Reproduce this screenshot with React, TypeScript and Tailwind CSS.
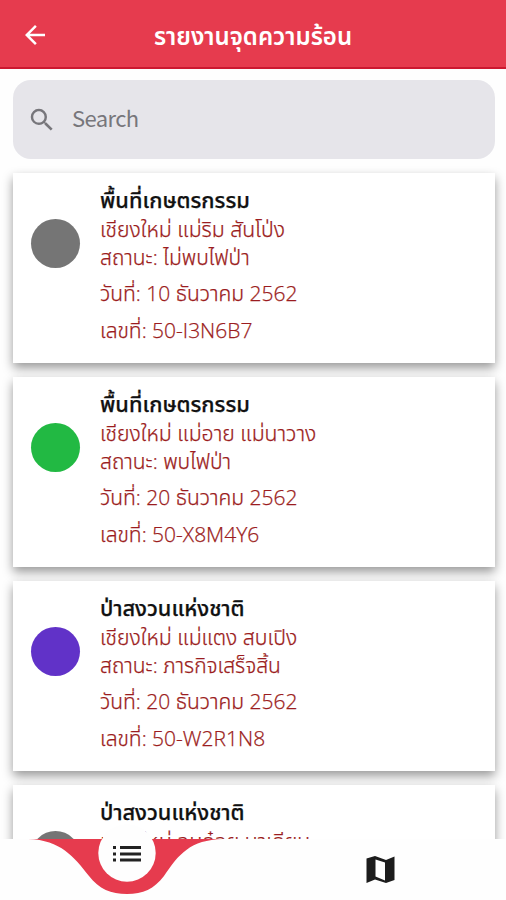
type Report = {
  id: number
  area: string
  place: string
  dot: string
  details?: { status: string; date: string; code: string }
}

const reports: Report[] = [
  {
    id: 1,
    area: 'พื้นที่เกษตรกรรม',
    place: 'เชียงใหม่ แม่ริม สันโป่ง',
    dot: 'bg-[#757575]',
    details: { status: 'ไม่พบไฟป่า', date: '10 ธันวาคม 2562', code: '50-I3N6B7' },
  },
  {
    id: 2,
    area: 'พื้นที่เกษตรกรรม',
    place: 'เชียงใหม่ แม่อาย แม่นาวาง',
    dot: 'bg-[#22b943]',
    details: { status: 'พบไฟป่า', date: '20 ธันวาคม 2562', code: '50-X8M4Y6' },
  },
  {
    id: 3,
    area: 'ป่าสงวนแห่งชาติ',
    place: 'เชียงใหม่ แม่แตง สบเปิง',
    dot: 'bg-[#6132c8]',
    details: { status: 'ภารกิจเสร็จสิ้น', date: '20 ธันวาคม 2562', code: '50-W2R1N8' },
  },
  {
    id: 4,
    area: 'ป่าสงวนแห่งชาติ',
    place: 'เชียงใหม่ อมก๋อย นาเกียน',
    dot: 'bg-[#757575]',
  },
]

function ReportCard({ report }: { report: Report }) {
  return (
    <li className="flex h-[190px] shrink-0 bg-white pl-[18px] shadow-[0_5px_10px_rgba(0,0,0,0.4)]">
      <div className={`mt-[46px] size-[49px] shrink-0 rounded-full ${report.dot}`} />
      <div className="ml-5 flex flex-col pt-3 font-['Open_Sans','Noto_Sans_Thai','Noto_Sans',sans-serif] text-[21px] font-light whitespace-nowrap text-[#9b1c20] [-webkit-text-stroke:0.25px]">
        <h2 className="h-[29px] text-[21.8px] leading-[29px] font-medium text-[#111]">{report.area}</h2>
        <p className="h-[29px] text-[21.2px] leading-[29px]">{report.place}</p>
        {report.details && (
          <>
            <p className="h-[32.5px] leading-[29px]">สถานะ: {report.details.status}</p>
            <p className="h-[37px] leading-[37px]">วันที่: {report.details.date}</p>
            <p className="h-[37px] leading-[37px]">เลขที่: {report.details.code}</p>
          </>
        )}
      </div>
    </li>
  )
}

function TabBar() {
  return (
    <nav className="absolute inset-x-0 bottom-0 h-[76px]">
      <svg className="h-full w-full" viewBox="0 824 506 76">
        <path d="M0 839H506V900H0Z" fill="#fefefe" />
        <path
          d="M28 839C61 840 74 857 89 876C99 889 111 894 127 894C143 894 154 889 164 876C179 854 190 840 223 839Z"
          fill="#e63b4e"
        />
        <circle cx="127" cy="853" r="28.7" fill="#fefefe" />
        <path
          d="M113 846h3v3h-3zM120 846h21v3h-21zM113 852.5h3v3h-3zM120 852.5h21v3h-21zM113 858.5h3v3h-3zM120 858.5h21v3h-21z"
          fill="#222"
        />
        <path
          fillRule="evenodd"
          d="M366.5 858.5L375 856L386 860L394.5 856.5V880L386 883L375 879.5L366.5 883ZM375.5 859.5V876.5L385 880.5V862.5Z"
          fill="#1c1c1c"
        />
      </svg>
    </nav>
  )
}

export default function App() {
  return (
    <main className="relative flex h-[900px] w-[506px] flex-col overflow-hidden bg-[#fefefe] font-['Noto_Sans','Noto_Sans_Thai',sans-serif]">
      <header className="grid h-[69px] shrink-0 grid-cols-[70px_1fr_70px] items-center border-b-2 border-[#cc1830] bg-[#e63b4e] pt-[3px] text-white">
        <svg className="ml-5 size-[30px]" viewBox="0 0 24 24" fill="currentColor">
          <path d="M20 11H7.830l5.590-5.590L12 4l-8 8 8 8 1.410-1.410L7.830 13H20v-2z" />
        </svg>
        <h1 className="pt-0.5 text-center text-[24px] leading-8 font-semibold">รายงานจุดความร้อน</h1>
      </header>

      <label className="mr-[11.5px] ml-[13px] mt-[11px] flex h-[79px] shrink-0 items-center rounded-[18px] bg-[#e6e5ea] text-[#77767b]">
        <svg className="ml-[14px] size-[30px]" viewBox="0 0 24 24" fill="currentColor">
          <path d="M15.500 14h-.79l-.28-.27A6.471 6.471 0 0 0 16 9.500 6.500 6.500 0 1 0 9.500 16c1.610 0 3.090-.59 4.230-1.570l.27.28v.79l5 4.990L20.490 19l-4.990-5zm-6 0C7.010 14 5 11.990 5 9.500S7.010 5 9.500 5 14 7.010 14 9.500 11.990 14 9.500 14z" />
        </svg>
        <span className="ml-[15px] pb-[5px] font-['Noto_Sans_CJK_SC',sans-serif] text-[22px] leading-8 tracking-[-0.6px]">
          Search
        </span>
      </label>

      <ul className="mr-[11.5px] ml-[13px] mt-[13.5px] flex flex-col gap-[14px]">
        {reports.map((report) => (
          <ReportCard key={report.id} report={report} />
        ))}
      </ul>

      <TabBar />
    </main>
  )
}
